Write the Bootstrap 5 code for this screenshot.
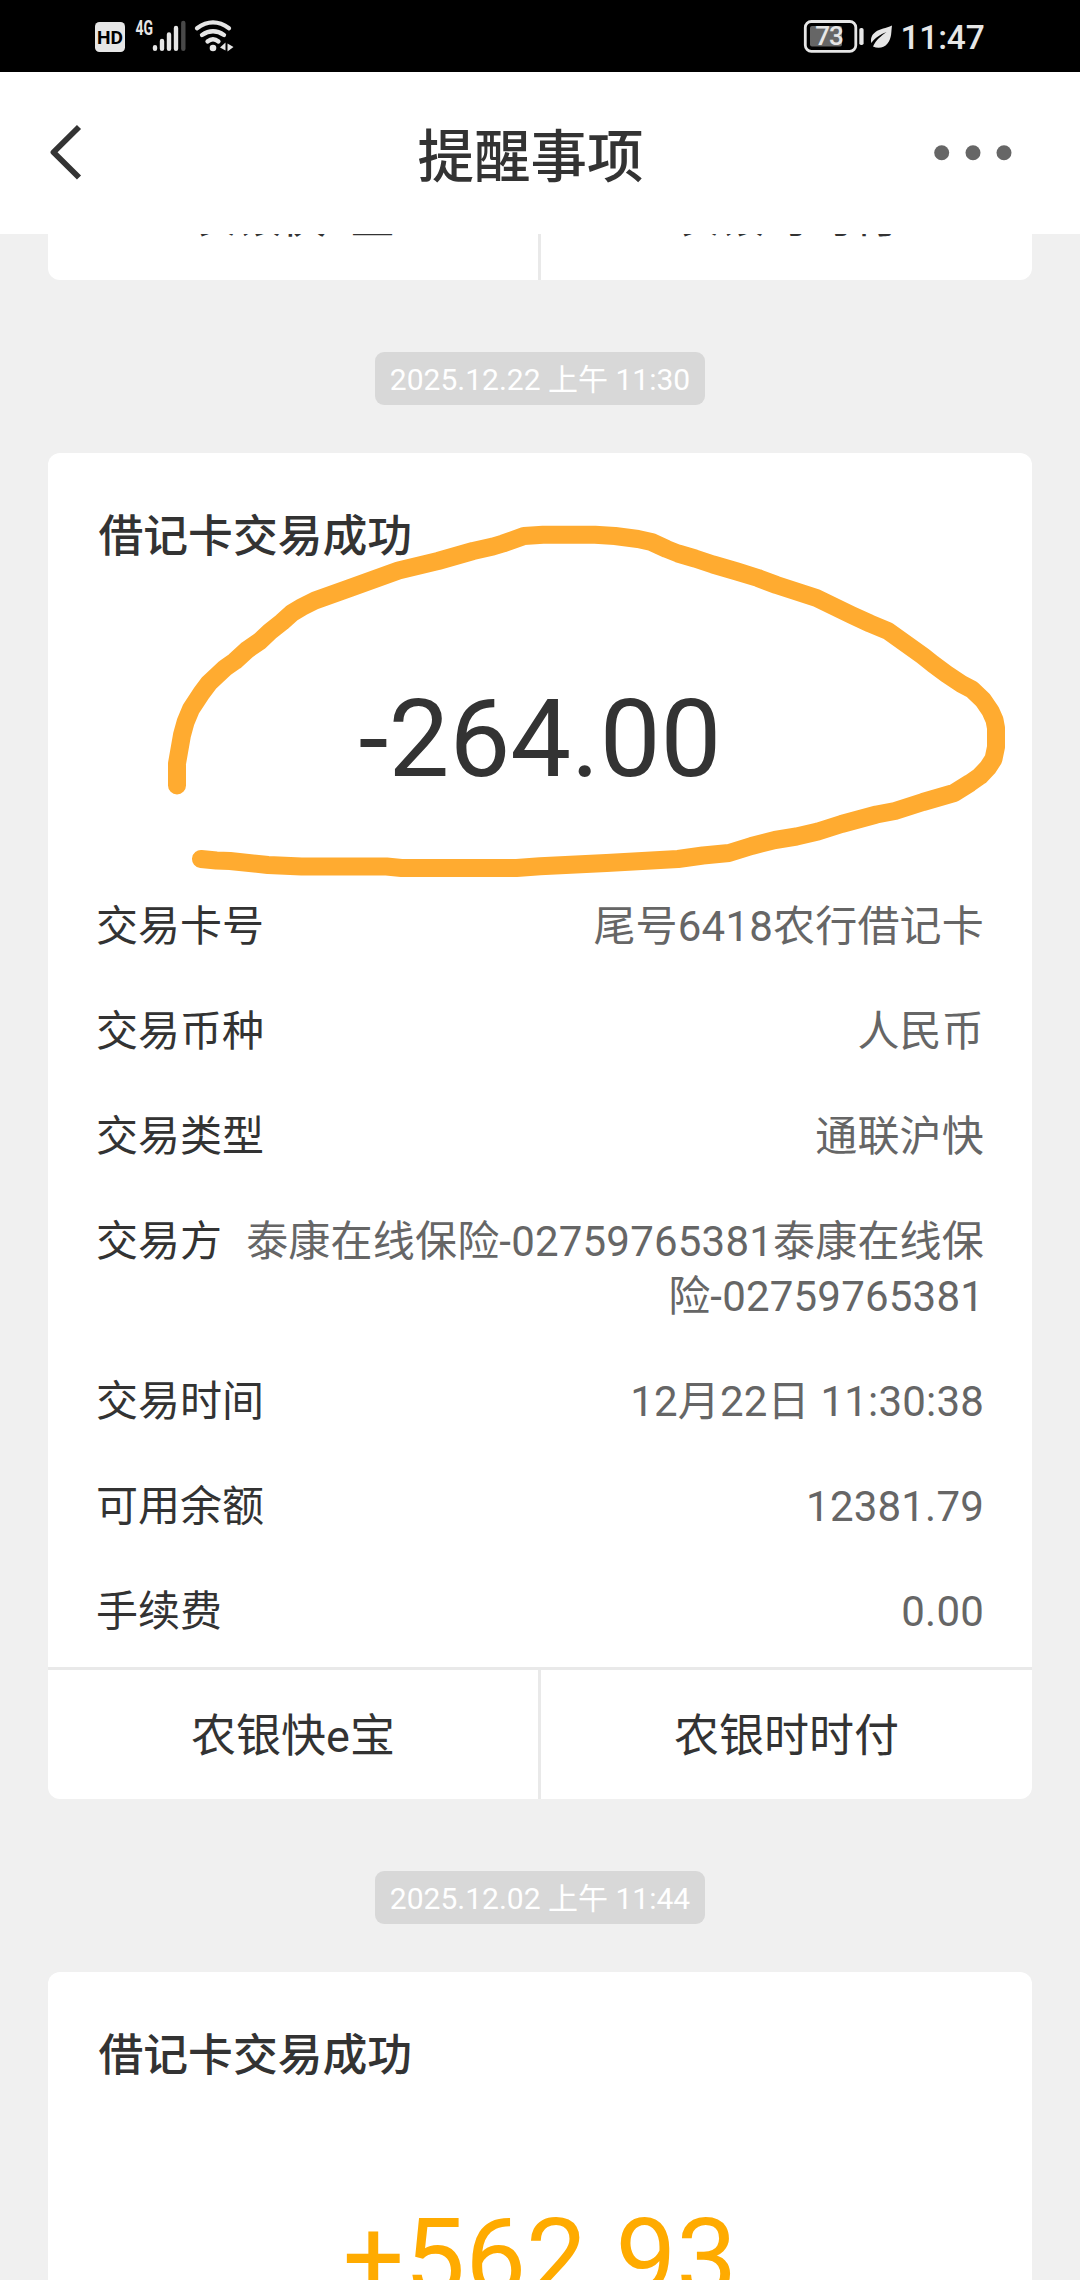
<!DOCTYPE html>
<html lang="zh-CN">
<head>
<meta charset="utf-8">
<meta name="viewport" content="width=device-width, initial-scale=1">
<title>提醒事项</title>
<link href="https://cdn.jsdelivr.net/npm/bootstrap@5.3.0/dist/css/bootstrap.min.css" rel="stylesheet">
<style>
  body { font-family: Roboto, "Noto Sans CJK SC", sans-serif; color: #333; background: #f0f0f0; height: 2280px; }
  .status-bar { height: 72px; background: #000; color: #e6e6e6; padding: 0 95px; }
  .status-bar svg { display: block; }
  .clock { font-size: 33.5px; line-height: 72px; font-weight: 500; letter-spacing: -.2px; width: 84.5px; margin-left: 8px; padding-top: 2px; white-space: nowrap; }
  .top-nav { height: 162px; padding: 0 46px; }
  .top-title { font-size: 56.5px; font-weight: 500; line-height: 80px; padding-top: 10px; }
  .feed { padding: 0 48px; }
  .prev-msg { margin-top: -86px; }
  .msg { border: 0; border-radius: 12px; background: #fff; }
  .stamp { height: 53px; margin: 72px 0 48px; padding: 0 15px; background: #d8d8d8; border-radius: 9px; color: #fff; font-size: 30px; line-height: 55px; white-space: nowrap; }
  .msg-title { font-size: 44.8px; font-weight: 500; line-height: 60px; padding: 54px 50.5px 0; }
  .amount { font-size: 108.3px; line-height: 130px; margin-top: 107px; margin-bottom: 95px; }
  .income { color: #ffab00; }
  .fields { padding: 0 48px 28px 48px; gap: 50px; font-size: 42px; line-height: 55px; }
  .fields .val { color: #666; max-width: 742px; letter-spacing: .2px; }
  .actions { border-top: 3px solid #e9e9e9; height: 132px; font-size: 45px; line-height: 134px; }
  .actions > :first-child { width: 493px; border-right: 3px solid #e9e9e9; }
  .pen { left: 0; top: 0; pointer-events: none; }
</style>
</head>
<body class="overflow-hidden d-flex flex-column">
<div class="status-bar d-flex justify-content-between flex-shrink-0">
  <svg width="140" height="72" viewBox="95 0 140 72" fill="#e6e6e6">
    <rect x="95" y="22" width="30" height="30" rx="4.5"/>
    <text x="110" y="43.500" font-size="19" font-weight="700" text-anchor="middle" textLength="26" lengthAdjust="spacingAndGlyphs" fill="#000">HD</text>
    <text x="135.5" y="35" font-size="20" font-weight="700" textLength="17.5" lengthAdjust="spacingAndGlyphs">4G</text>
    <g stroke="#e6e6e6" stroke-width="4.4" stroke-linecap="round">
      <path d="M155 47.3v1.5M162 41v7.8M169 34.5v14.3M176 28v20.8"/>
      <path d="M183.300 23v25.800" stroke="#484848"/>
    </g>
    <g fill="none" stroke="#e6e6e6" stroke-width="4.300" stroke-linecap="round">
      <path d="M197 28.300Q213 16.500 229 28.300M202 35Q213 27.500 224 35M207.500 41.500Q213 37 218.500 41.500"/>
    </g>
    <circle cx="213" cy="48" r="3.300"/>
    <path d="M225.500 42.500v8l-5.500-3zM227.500 43.500l6 3.500-6 4.500z"/>
  </svg>
  <div class="d-flex">
    <svg width="90" height="72" viewBox="803 0 90 72">
      <rect x="805.300" y="21.500" width="50.500" height="29.800" rx="6" fill="none" stroke="#e6e6e6" stroke-width="2.800"/>
      <rect x="810" y="26" width="32" height="20.500" rx="2" fill="#666"/>
      <rect x="859.300" y="28" width="4.300" height="17" rx="1.800" fill="#e6e6e6"/>
      <text x="829.500" y="45" font-size="26" font-weight="500" text-anchor="middle" fill="#e6e6e6" textLength="28.500">73</text>
      <path d="M892 25.500C886 28.500 880 28.500 875.500 32C871.500 35 870.500 38.500 871.300 43C875.500 37.500 880 34.500 886.500 32C881 36 876 40 873 46.500C878 49 884 48 887.500 43.500C892 38 891 32 892 25.500Z" fill="#e6e6e6"/>
    </svg>
    <div class="clock">11:47</div>
  </div>
</div>
<header class="top-nav bg-white d-flex align-items-center justify-content-between flex-shrink-0">
  <svg width="81" height="60" viewBox="46 123 81 60" fill="none" stroke="#333" stroke-width="5.800"><path d="M79 127L53.500 152.200L79 177.500" stroke-linejoin="round"/></svg>
  <div class="top-title">提醒事项</div>
  <svg width="100" height="60" viewBox="934 123 100 60" fill="#666"><circle cx="941.700" cy="152.800" r="7.500"/><circle cx="973" cy="152.800" r="7.500"/><circle cx="1004" cy="152.800" r="7.500"/></svg>
</header>
<main class="feed flex-grow-1 overflow-hidden">
  <div class="prev-msg msg card">
    <div class="actions d-flex text-center"><div>农银快e宝</div><div class="flex-grow-1">农银时时付</div></div>
  </div>
  <div class="d-flex justify-content-center"><div class="stamp">2025.12.22 上午 11:30</div></div>
  <section class="msg card position-relative">
    <div class="msg-title">借记卡交易成功</div>
    <div class="amount text-center">-264.00</div>
    <div class="fields d-flex flex-column">
      <div class="d-flex justify-content-between"><span>交易卡号</span><span class="val text-end">尾号6418农行借记卡</span></div>
      <div class="d-flex justify-content-between"><span>交易币种</span><span class="val text-end">人民币</span></div>
      <div class="d-flex justify-content-between"><span>交易类型</span><span class="val text-end">通联沪快</span></div>
      <div class="d-flex justify-content-between"><span>交易方</span><span class="val text-end">泰康在线保险-02759765381泰康在线保<br>险-02759765381</span></div>
      <div class="d-flex justify-content-between"><span>交易时间</span><span class="val text-end">12月22日 11:30:38</span></div>
      <div class="d-flex justify-content-between"><span>可用余额</span><span class="val text-end">12381.79</span></div>
      <div class="d-flex justify-content-between"><span>手续费</span><span class="val text-end">0.00</span></div>
    </div>
    <div class="actions d-flex text-center"><div>农银快e宝</div><div class="flex-grow-1">农银时时付</div></div>
    <!-- Pen annotation drawn over the amount -->
    <svg class="pen position-absolute" width="984" height="450" viewBox="48 453 984 450" fill="none" stroke="#ffab30" stroke-width="18" stroke-linecap="round" stroke-linejoin="round">
      <path d="M177 785.500L177 763.500L182 735L185.700 721.700L191 709L201.500 693L209 683L225 668L235 661L247 650L260 641L270 631.500L282 622L292 613L302 607L315 600.500L350 588L398.500 570.500L438 561L473 551L493 546.500L503 543.500L524 536L543 534.700L595 534.700L615 536L638 539L651.500 542L666.700 549L678 553.500L695 558.500L713 564.500L737 571.500L758 578L776.500 585L816.500 598L851.500 615L870 623.500L888 631L923 656L933 664L946.500 674L961.500 684L972 689.500L983 700L990.500 711L994.500 720L996 728L996 747L993.500 759L988 767.500L980 776L970 783L954 793L923 802L895 811L876.500 814.500L841.500 824L818 831.500L796.500 836.500L775 840L751.500 846L729 853L703 855.500L678 859L606.500 863L540 866.300L516.500 868L401.500 868L386.500 866.500L301.500 866.500L268 865L230 861L216.500 860.500L201 859"/>
    </svg>
  </section>
  <div class="d-flex justify-content-center"><div class="stamp">2025.12.02 上午 11:44</div></div>
  <section class="msg card">
    <div class="msg-title">借记卡交易成功</div>
    <div class="amount income text-center">+562.93</div>
  </section>
</main>
<script src="https://cdn.jsdelivr.net/npm/bootstrap@5.3.0/dist/js/bootstrap.bundle.min.js"></script>
</body>
</html>
